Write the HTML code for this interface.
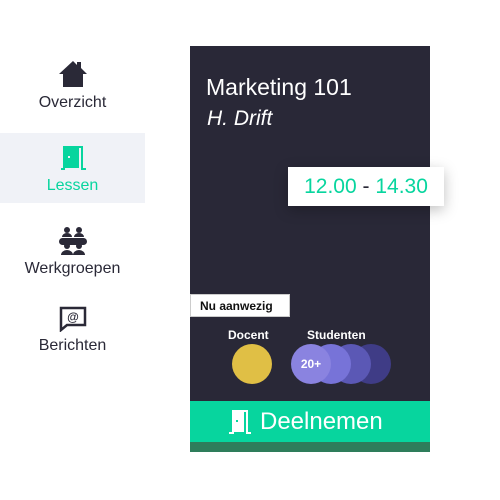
<!DOCTYPE html>
<html><head><meta charset="utf-8"><style>
*{margin:0;padding:0;box-sizing:border-box}
body{width:500px;height:500px;background:#fff;font-family:"Liberation Sans",sans-serif;position:relative;overflow:hidden;color:#2a2937}
.nav{position:absolute;left:0;width:145px;text-align:center;font-size:16px}
.nav svg{display:block;margin:0 auto}
.card{position:absolute;left:190px;top:46px;width:240px;height:406px;background:#292837}
.t1{position:absolute;left:16px;top:28px;color:#fff;font-size:23px}
.t2{position:absolute;left:17px;top:61px;color:#fff;font-size:21px;font-style:italic}
.time{position:absolute;left:288px;top:167px;width:156px;height:39px;background:#fff;box-shadow:0 4px 14px rgba(0,0,0,.25);color:#07d59e;font-size:21px;line-height:39px;text-align:center}
.badge{position:absolute;left:0;top:248px;width:100px;height:23px;background:#fff;color:#111;font-size:12px;font-weight:bold;line-height:22px;padding-left:9px;border:1px solid #ccc}
.lbl{position:absolute;color:#fff;font-size:12px;font-weight:bold;top:282px}
.c{position:absolute;width:40px;height:40px;border-radius:50%;top:298px}
.btn{position:absolute;left:0;top:355px;width:240px;height:41px;background:#07d59e;color:#fff;font-size:24px;line-height:41px}
.bar{position:absolute;left:0;top:396px;width:240px;height:10px;background:#2e7d5b}
</style></head><body>
<div class="nav" style="top:60px">
<svg width="30" height="28" viewBox="0 0 30 28"><path d="M15 1L1 14h4v13h20V14h4L23 8V2h-4v3z" fill="#2a2937"/></svg>
<div style="margin-top:6px">Overzicht</div></div>
<div style="position:absolute;left:0;top:133px;width:145px;height:70px;background:#f0f2f7"></div>
<div class="nav" style="top:144px;color:#07d59e">
<svg width="28" height="28" viewBox="0 0 28 28"><path d="M4 2h16v22H4z M20 2h4v22h3v2h-5V4h-2z M2 24h4v2H2z" fill="#07d59e"/><rect x="9" y="12" width="2" height="2" fill="#f0f2f7"/></svg>
<div style="margin-top:5px">Lessen</div></div>
<div class="nav" style="top:226px">
<svg width="32" height="30" viewBox="0 0 32 30"><circle cx="10" cy="4" r="3" fill="#2a2937"/><circle cx="22" cy="4" r="3" fill="#2a2937"/><path d="M5 11a5 4 0 0110 0zM17 11a5 4 0 0110 0z" fill="#2a2937"/><rect x="2" y="12" width="28" height="7" rx="3.5" fill="#2a2937"/><circle cx="10" cy="20" r="3" fill="#2a2937"/><circle cx="22" cy="20" r="3" fill="#2a2937"/><path d="M4 29a6 5 0 0112 0zM16 29a6 5 0 0112 0z" fill="#2a2937"/></svg>
<div style="margin-top:4px">Werkgroepen</div></div>
<div class="nav" style="top:306px">
<svg width="30" height="26" viewBox="0 0 30 26"><path d="M3 2h24v17H9l-6 5z" fill="none" stroke="#2a2937" stroke-width="2.5"/><text x="15" y="15" font-size="12" font-weight="bold" text-anchor="middle" fill="#2a2937" font-family="Liberation Sans">@</text></svg>
<div style="margin-top:5px">Berichten</div></div>
<div class="card">
<div class="t1">Marketing 101</div>
<div class="t2">H. Drift</div>
<div class="badge">Nu aanwezig</div>
<div class="lbl" style="left:38px">Docent</div>
<div class="lbl" style="left:117px">Studenten</div>
<div class="c" style="left:42px;background:#e0bf45"></div>
<div class="c" style="left:161px;background:#3f3c86"></div>
<div class="c" style="left:141px;background:#5b58b5"></div>
<div class="c" style="left:121px;background:#7773d8"></div>
<div class="c" style="left:101px;background:#8a83e0;color:#fff;font-size:12px;font-weight:bold;line-height:40px;text-align:center">20+</div>
<div class="btn"><svg style="position:absolute;left:38px;top:8px" width="24" height="26" viewBox="0 0 24 26"><path d="M4 1h12v22H4z M16 1h4v22h3v2h-5V3h-2z M1 23h5v2H1z" fill="#fff"/><rect x="8" y="11" width="2" height="2" fill="#07d59e"/></svg><span style="position:absolute;left:70px">Deelnemen</span></div>
<div class="bar"></div>
</div>
<div class="time">12.00 <span style="color:#2a2937">-</span> 14.30</div>
</body></html>
